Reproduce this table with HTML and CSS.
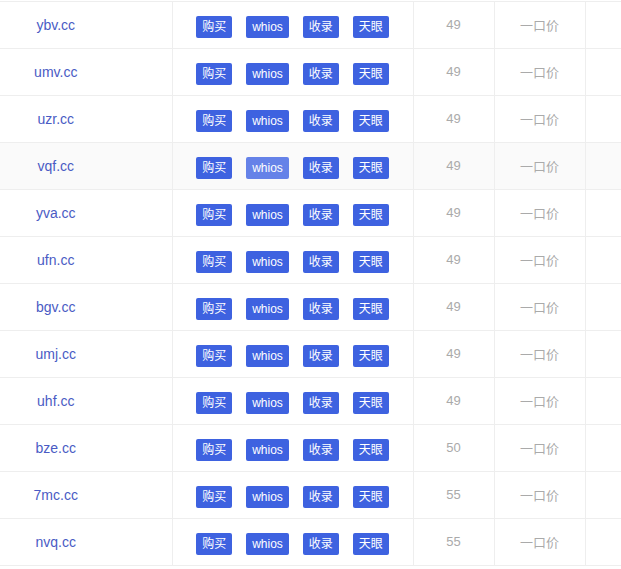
FILE: index.html
```html
<!DOCTYPE html>
<html>
<head>
<meta charset="utf-8">
<link rel="stylesheet" href="styles.css">
</head>
<body>
<div class="wrap">
<table class="grid">
<colgroup><col class="c1"><col class="c2"><col class="c3"><col class="c4"><col class="c5"></colgroup>
<tbody>
<tr><td class="dom">ybv.cc</td><td class="ops"><span class="btn">购买</span><span class="btn">whios</span><span class="btn">收录</span><span class="btn">天眼</span></td><td class="num">49</td><td class="type">一口价</td><td></td></tr>
<tr><td class="dom">umv.cc</td><td class="ops"><span class="btn">购买</span><span class="btn">whios</span><span class="btn">收录</span><span class="btn">天眼</span></td><td class="num">49</td><td class="type">一口价</td><td></td></tr>
<tr><td class="dom">uzr.cc</td><td class="ops"><span class="btn">购买</span><span class="btn">whios</span><span class="btn">收录</span><span class="btn">天眼</span></td><td class="num">49</td><td class="type">一口价</td><td></td></tr>
<tr class="hover"><td class="dom">vqf.cc</td><td class="ops"><span class="btn">购买</span><span class="btn btn-hover">whios</span><span class="btn">收录</span><span class="btn">天眼</span></td><td class="num">49</td><td class="type">一口价</td><td></td></tr>
<tr><td class="dom">yva.cc</td><td class="ops"><span class="btn">购买</span><span class="btn">whios</span><span class="btn">收录</span><span class="btn">天眼</span></td><td class="num">49</td><td class="type">一口价</td><td></td></tr>
<tr><td class="dom">ufn.cc</td><td class="ops"><span class="btn">购买</span><span class="btn">whios</span><span class="btn">收录</span><span class="btn">天眼</span></td><td class="num">49</td><td class="type">一口价</td><td></td></tr>
<tr><td class="dom">bgv.cc</td><td class="ops"><span class="btn">购买</span><span class="btn">whios</span><span class="btn">收录</span><span class="btn">天眼</span></td><td class="num">49</td><td class="type">一口价</td><td></td></tr>
<tr><td class="dom">umj.cc</td><td class="ops"><span class="btn">购买</span><span class="btn">whios</span><span class="btn">收录</span><span class="btn">天眼</span></td><td class="num">49</td><td class="type">一口价</td><td></td></tr>
<tr><td class="dom">uhf.cc</td><td class="ops"><span class="btn">购买</span><span class="btn">whios</span><span class="btn">收录</span><span class="btn">天眼</span></td><td class="num">49</td><td class="type">一口价</td><td></td></tr>
<tr><td class="dom">bze.cc</td><td class="ops"><span class="btn">购买</span><span class="btn">whios</span><span class="btn">收录</span><span class="btn">天眼</span></td><td class="num">50</td><td class="type">一口价</td><td></td></tr>
<tr><td class="dom">7mc.cc</td><td class="ops"><span class="btn">购买</span><span class="btn">whios</span><span class="btn">收录</span><span class="btn">天眼</span></td><td class="num">55</td><td class="type">一口价</td><td></td></tr>
<tr><td class="dom">nvq.cc</td><td class="ops"><span class="btn">购买</span><span class="btn">whios</span><span class="btn">收录</span><span class="btn">天眼</span></td><td class="num">55</td><td class="type">一口价</td><td></td></tr>
</tbody>
</table>
</div>
</body>
</html>
```
FILE: styles.css
```css
html, body {
  margin: 0;
  padding: 0;
  background: #fff;
  overflow: hidden;
}
body {
  font-family: "Liberation Sans", Arial, "Noto Sans CJK SC", sans-serif;
}
.wrap {
  padding-top: 1px;
  width: 680px;
}
.grid {
  border-collapse: collapse;
  table-layout: fixed;
  width: 680px;
  border-top: 1px solid #eeeeee;
}
.c1 { width: 172px; }
.c2 { width: 241px; }
.c3 { width: 81px; }
.c4 { width: 91px; }
.c5 { width: 95px; }
.grid tr {
  height: 47px;
}
.grid td {
  padding: 0;
  line-height: 20px;
  border-bottom: 1px solid #eeeeee;
  border-right: 1px solid #eeeeee;
  text-align: center;
  vertical-align: middle;
}
.grid tr.hover td {
  background: #fafafa;
}
.grid td.dom {
  font-size: 14px;
  color: #4a5bc4;
  padding-right: 60px;
}
.ops {
  font-size: 0;
}
.btn {
  display: inline-block;
  height: 22px;
  line-height: 22px;
  padding: 0 6px;
  margin: 3px 7px 0;
  border-radius: 2px;
  background: #3e62e0;
  color: #fff;
  font-size: 12px;
  font-family: "Liberation Sans", Arial, "Noto Sans CJK SC", sans-serif;
  vertical-align: top;
}
.btn-hover {
  background: #6582e8;
}
.num {
  font-size: 13px;
  color: #aaaaaa;
}
.type {
  font-size: 13px;
  color: #aaaaaa;
  font-family: "Noto Sans CJK SC", sans-serif;
}
```
